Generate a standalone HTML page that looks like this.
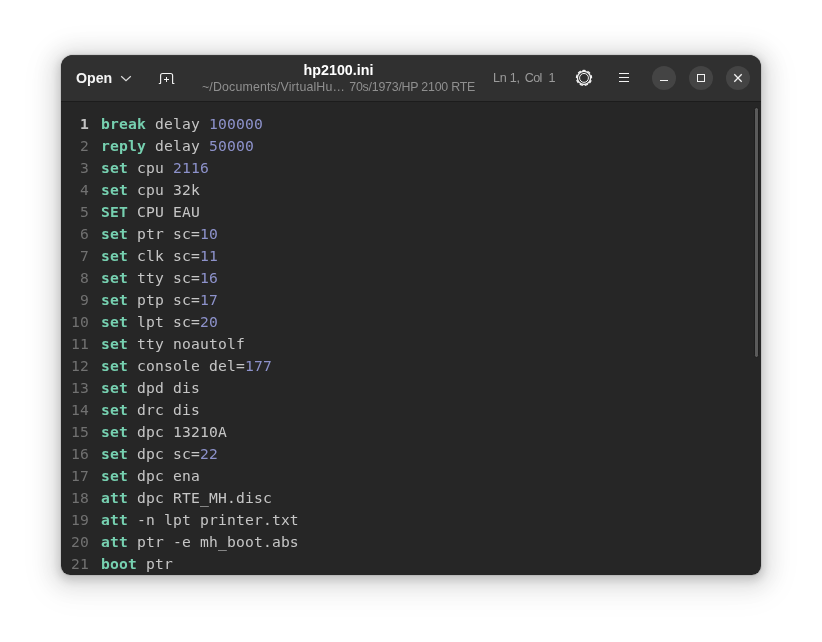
<!DOCTYPE html>
<html lang="en">
<head>
<meta charset="utf-8">
<title>hp2100.ini</title>
<style>
html,body{margin:0;padding:0;}
body{width:822px;height:642px;background:#fff;overflow:hidden;position:relative;font-family:"Liberation Sans",sans-serif;}
#win{position:absolute;left:61px;top:55px;width:700px;height:520px;border-radius:12px 12px 9px 9px;background:#262626;overflow:hidden;}
#shadow{position:absolute;left:61px;top:55px;width:700px;height:520px;border-radius:12px 12px 9px 9px;
 box-shadow:0 0 0 1px rgba(0,0,0,.07),0 3px 9px 2px rgba(0,0,0,.14),0 3px 20px 10px rgba(0,0,0,.09),0 6px 32px 16px rgba(0,0,0,.04);}
#hdr{position:absolute;left:0;top:0;width:700px;height:47px;background:#303030;border-bottom:1px solid #1c1c1c;box-sizing:border-box;box-shadow:inset 0 1px 0 rgba(255,255,255,.04);}
#hdr div{position:absolute;white-space:nowrap;will-change:transform;}
#hdr svg{position:absolute;left:0;top:0;}
#open{left:15px;top:15px;font-size:14.2px;line-height:16px;font-weight:bold;color:#f4f4f4;}
#title{left:189px;width:177px;text-align:center;top:7px;font-size:14.3px;line-height:16px;font-weight:bold;color:#fff;}
#sub{left:140.5px;top:25px;font-size:12.36px;line-height:14px;color:#8f8f8f;}
#s1{letter-spacing:.155px;}
#s2{letter-spacing:-.22px;margin-left:.9px;}
#p2{margin-left:1.8px;letter-spacing:-.7px;}
#p3{margin-left:.3px;}
#pos{left:432.3px;top:15px;font-size:12.6px;letter-spacing:-0.25px;line-height:16px;color:#9b9b9b;}
.wb{width:24px;height:24px;border-radius:12px;background:#444;top:11px;}
#ed{position:absolute;left:0;top:47px;width:700px;height:473px;}
pre{margin:0;position:absolute;font-family:"DejaVu Sans Mono","Liberation Mono",monospace;font-size:14.667px;line-height:22px;letter-spacing:0.17px;will-change:transform;}
#ln{left:0;top:11px;width:28px;text-align:right;color:#717171;}
#ln b{color:#c2c2c2;}
#code{left:40px;top:11px;color:#c6c6c6;}
#code b{color:#76d0b0;}
#code i{font-style:normal;color:#8d92cb;}
#sb{position:absolute;left:693px;top:5px;width:3px;height:249px;background:#5a5a5a;border:1px solid #1e1e1e;border-radius:3px;}
</style>
</head>
<body>
<div id="shadow"></div>
<div id="win">
 <div id="hdr">
  <div id="open">Open</div>
  <div id="title">hp2100.ini</div>
  <div id="sub"><span id="s1">~/Documents/VirtualHu…</span> <span id="s2">70s/1973/HP 2100 RTE</span></div>
  <div id="pos">Ln <span id="p1">1,</span> <span id="p2">Col</span>&nbsp; <span id="p3">1</span></div>
  <div class="wb" style="left:591px"></div>
  <div class="wb" style="left:628px"></div>
  <div class="wb" style="left:665px"></div>
  <svg width="700" height="47" viewBox="61 55 700 47" fill="none" stroke="#f2f2f2" stroke-width="1">
   <!-- chevron -->
   <path d="M121.2 76.3 L126 80.8 L130.8 76.3" stroke="#dcdcdc" stroke-width="1.2"/>
   <!-- new tab -->
   <path d="M158.800 83.500h1.200q.600 0 .600-.600v-7.400q0-2 2-2h8q2 0 2 2v7.400q0 .600 .600 .600h1.200" stroke-width="1.150"/>
   <path d="M164 79.500h5M166.500 77v5"/>
   <!-- gear -->
   <g transform="translate(584 77.900)">
    <circle r="4.450" stroke-width="1"/>
    <circle r="6.600" stroke-width="1.300"/>
    <circle r="7.500" stroke-width="1.300" stroke-dasharray="3.300 1.936" transform="rotate(-102.600)"/>
   </g>
   <!-- hamburger -->
   <path d="M619 73.500h10M619 77.500h10M619 81.500h10"/>
   <!-- minimize -->
   <path d="M660 80.500h8"/>
   <!-- maximize -->
   <rect x="697.500" y="74.500" width="7" height="7"/>
   <!-- close -->
   <path d="M734.300 74.300l7.400 7.400M741.700 74.300l-7.400 7.400" stroke-width="1.300"/>
  </svg>
 </div>
 <div id="ed">
<pre id="ln"><b>1</b>
2
3
4
5
6
7
8
9
10
11
12
13
14
15
16
17
18
19
20
21</pre>
<pre id="code"><b>break</b> delay <i>100000</i>
<b>reply</b> delay <i>50000</i>
<b>set</b> cpu <i>2116</i>
<b>set</b> cpu 32k
<b>SET</b> CPU EAU
<b>set</b> ptr sc=<i>10</i>
<b>set</b> clk sc=<i>11</i>
<b>set</b> tty sc=<i>16</i>
<b>set</b> ptp sc=<i>17</i>
<b>set</b> lpt sc=<i>20</i>
<b>set</b> tty noautolf
<b>set</b> console del=<i>177</i>
<b>set</b> dpd dis
<b>set</b> drc dis
<b>set</b> dpc 13210A
<b>set</b> dpc sc=<i>22</i>
<b>set</b> dpc ena
<b>att</b> dpc RTE_MH.disc
<b>att</b> -n lpt printer.txt
<b>att</b> ptr -e mh_boot.abs
<b>boot</b> ptr</pre>
  <div id="sb"></div>
 </div>
</div>
</body>
</html>
